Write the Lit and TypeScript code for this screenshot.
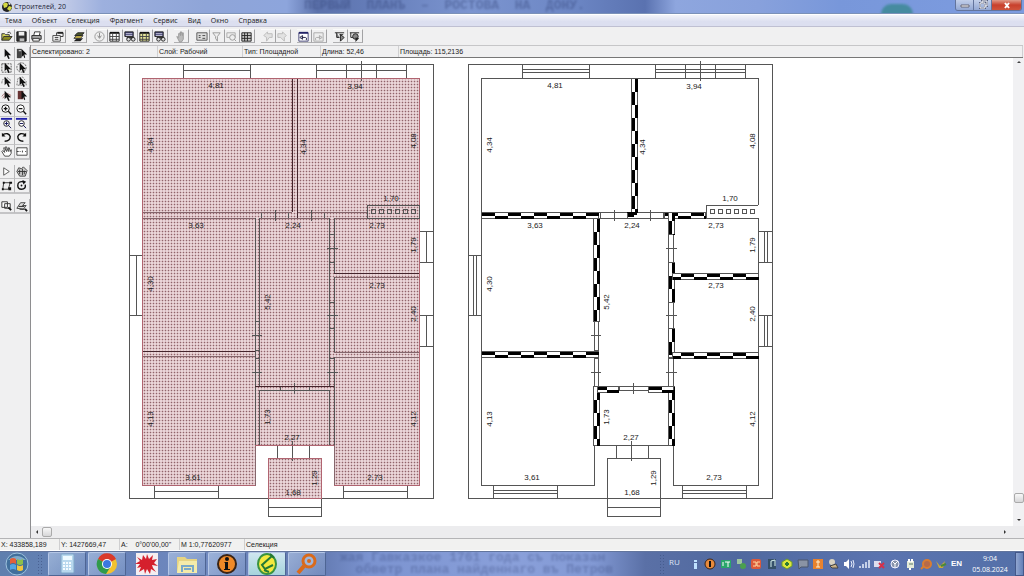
import { LitElement, html, svg, css } from "lit";

const arrow = svg`<path d="M5 2v9l2-2 2 4 1.500-.6-1.600-3.400H12z" fill="#111"/>`;
const ICONS: Record<string, unknown> = {
  open: svg`<path d="M2 11V4h3l1 1h4v2" fill="#d6d65a" stroke="#333"/><path d="M2 11l2-4h9l-3 4z" fill="#8a8a20" stroke="#333"/><path d="M8 3q2-2 4 1" fill="none" stroke="#333"/>`,
  save: svg`<path d="M2 2h10v10H2z" fill="#333" stroke="#111"/><path d="M4 2h6v4H4z" fill="#eee"/><path d="M5 9h5v3H5z" fill="#bbb"/>`,
  print: svg`<path d="M4 6l1-4h6l-1 4" fill="#fff" stroke="#333"/><path d="M2 6h10v4H2z" fill="#aaa" stroke="#222"/><path d="M3 9h7v3H3z" fill="#eee" stroke="#333"/>`,
  props: svg`<path d="M2 6h8v6H2z" fill="#fff" stroke="#444"/><path d="M4 8h4M4 10h4M6 6V3h7v4h-3" fill="none" stroke="#333"/><path d="M7 3h6" stroke="#222" stroke-width="2"/>`,
  layers: svg`<path d="M2 12l3-3h7l-3 3z" fill="#222"/><path d="M2 9l3-3h7l-3 3z" fill="#ccb84a" stroke="#333"/><path d="M3 6l3-3h7l-3 3z" fill="#4b5730" stroke="#222"/>`,
  clock: svg`<circle cx="7" cy="7" r="5" fill="#eee" stroke="#999"/><path d="M7 3v5M5 6l2 3 2-3" fill="none" stroke="#888"/>`,
  table: svg`<path d="M2 3h10v9H2z" fill="#fff" stroke="#222"/><path d="M2 3h10" stroke="#111" stroke-width="2"/><path d="M5 3v9M9 3v9M2 7h10M2 10h10" stroke="#444"/>`,
  tableY: svg`<path d="M2 3h10v9H2z" fill="#e5e59a" stroke="#222"/><path d="M2 3h10" stroke="#111" stroke-width="2"/><path d="M5 3v9M9 3v9M2 7h10M2 10h10" stroke="#444"/>`,
  search: svg`<path d="M2 2h9v5H2z" fill="#447" stroke="#222"/><path d="M3 4h7M3 6h7" stroke="#ccd"/><path d="M4 8h8" stroke="#333" stroke-width="2"/><circle cx="6" cy="10" r="2" fill="#ddd" stroke="#222"/><circle cx="11" cy="10" r="2" fill="#ddd" stroke="#222"/>`,
  hand: svg`<path d="M3 7l2 1V4l1-1 1 3V2h1l1 4V3h1v7l-2 3H6z" fill="#bbb" stroke="#999"/>`,
  card: svg`<path d="M2 3h11v8H2z" fill="#ddd" stroke="#555"/><path d="M4 6h2M4 8h2M8 6h3M8 9h3" stroke="#444"/>`,
  filter: svg`<path d="M3 3h8L8 7v5L6 9V7z" fill="#eee" stroke="#999"/>`,
  find: svg`<path d="M2 3h9v5H2z" fill="#eee" stroke="#aaa"/><circle cx="8" cy="8" r="3" fill="#eee" stroke="#999"/><path d="M10 10l2 2" stroke="#999"/>`,
  grid: svg`<path d="M2 3h10v9H2zM5 3v9M8 3v9M2 6h10M2 9h10" fill="#ccc" stroke="#222"/>`,
  left: svg`<path d="M3 6l4-4v2h5v4h-3l-3 4V8z" fill="#e2e2e2" stroke="#bbb"/>`,
  right: svg`<path d="M11 6L7 2v2H2v4h3l4 4V8z" fill="#e2e2e2" stroke="#bbb"/>`,
  undo: svg`<path d="M2 3h10v9H2z" fill="#fff" stroke="#447"/><path d="M2 3h10" stroke="#226" stroke-width="2"/><path d="M3 8l3-2v4zM5 8h4q2 0 1 3" fill="none" stroke="#224"/>`,
  redo: svg`<path d="M2 3h10v9H2z" fill="#eee" stroke="#aaa"/><path d="M11 8L8 6v4zM9 8H5q-2 0-1 3" fill="none" stroke="#aaa"/>`,
  tree: svg`<path d="M2 3h10M4 3v5h3M7 5h4M8 5v7l4-4z" fill="#888" stroke="#222"/>`,
  tree2: svg`<path d="M2 3h10M3 3v5h3" fill="none" stroke="#222"/><circle cx="8" cy="7" r="3" fill="#888" stroke="#222"/><path d="M8 8v5l4-4z" fill="#222"/>`,
  arrow,
  arrowBox: svg`<path d="M2 2h5v10H2z" fill="#444"/><path d="M4 4h3" stroke="#eee"/><path d="M7 2v9l2-2 1 3 1-1-1-3h3z" fill="#111"/>`,
  selRect: svg`<path d="M2 3h10v9H2z" fill="none" stroke="#555" stroke-dasharray="2 1"/>${arrow}`,
  selCircle: svg`<circle cx="7" cy="7" r="5" fill="none" stroke="#555" stroke-dasharray="2 1"/>${arrow}`,
  selArc: svg`<path d="M2 9q0-6 6-6l4 3" fill="none" stroke="#777" stroke-dasharray="2 1"/>${arrow}`,
  selPoly: svg`<path d="M2 11l1-7 5-2 4 5v4z" fill="none" stroke="#777" stroke-dasharray="2 1"/>${arrow}`,
  selRed: svg`<path d="M2 8q3-6 10-1M3 10q3-6 8-1" fill="none" stroke="#a77"/>${arrow}`,
  arrowRed: svg`<path d="M3 2h6v9H3z" fill="#633"/><path d="M7 2v9l2-2 1 3 1-1-1-3h3z" fill="#111"/>`,
  zoomIn: svg`<circle cx="6" cy="6" r="4" fill="#fff" stroke="#111"/><path d="M4 6h4M6 4v4M9 9l3 3" stroke="#111" stroke-width="1.500"/>`,
  zoomOut: svg`<circle cx="6" cy="6" r="4" fill="#fff" stroke="#222"/><path d="M4 6h4M9 9l3 3" stroke="#111" stroke-width="1.500"/>`,
  zoomInB: svg`<path d="M1 2h12" stroke="#22a" stroke-width="2"/><circle cx="7" cy="7" r="3" fill="#fff" stroke="#222"/><path d="M5 7h4M7 5v4M9 9l3 3" stroke="#115"/>`,
  zoomOutB: svg`<path d="M1 2h12" stroke="#22a" stroke-width="2"/><circle cx="7" cy="7" r="3" fill="#fff" stroke="#222"/><path d="M5 7h4M9 9l3 3" stroke="#115"/>`,
  rotL: svg`<path d="M3 4q6-3 8 2 0 5-6 5" fill="none" stroke="#111" stroke-width="1.500"/><path d="M2 2v4h4z" fill="#111"/>`,
  rotR: svg`<path d="M11 4q-6-3-8 2 0 5 6 5" fill="none" stroke="#111" stroke-width="1.500"/><path d="M12 2v4H8z" fill="#111"/>`,
  pan: svg`<path d="M5 12L2 7l1-1 2 2-1-5h1l2 4-1-5h1l2 5 0-4h1l1 4 1-2 0 4-2 3z" fill="#fff" stroke="#444"/>`,
  frame: svg`<path d="M2 3h11v8H2z" fill="#fff" stroke="#444"/><path d="M2 7h2M5 7h1M8 6v2M11 7h1" stroke="#333"/>`,
  triangle: svg`<path d="M4 3v8l6-4z" fill="#fff" stroke="#555"/>`,
  handSel: svg`<path d="M5 12L2 7l2-4 3 1 2-2 4 4-2 6z" fill="#ccc" stroke="#444"/><path d="M5 5v5M8 4v7M10 6v4M3 7h9" stroke="#333"/>`,
  nodes: svg`<path d="M3 11L4 4h7l-2 7z" fill="none" stroke="#333"/><path d="M2 10h2v2H2zM3 3h2v2H3zM10 3h3v2h-3zM9 9h3v3H9z" fill="#111"/>`,
  rotate: svg`<path d="M9 3q-6-1-6 4 0 4 4 4 5 0 4-5" fill="none" stroke="#111" stroke-width="1.500"/><path d="M8 1l4 2-3 3z" fill="#111"/><circle cx="7" cy="7" r="1" fill="#111"/>`,
  copyObj: svg`<path d="M2 3h6v6H2zM5 5h6v5H5z" fill="#fff" stroke="#333"/><path d="M9 9l3 3" stroke="#111" stroke-width="2"/>`,
  stackObj: svg`<path d="M2 10l4-6h5l-3 3h4l-3 4z" fill="#ddd" stroke="#444"/><path d="M4 8h6M5 11h7" stroke="#222"/><path d="M11 11l2 2" stroke="#111" stroke-width="2"/>`,
};

const TOOLBAR = [
  [["open", "Открыть"], ["save", "Сохранить"], ["print", "Печать"]],
  [["props", "Свойства"]],
  [["layers", "Слои"]],
  [["clock", "Время"], ["table", "Таблица"], ["search", "Поиск"], ["tableY", "Выборка"], ["search", "Поиск в выборке"]],
  [["hand", "Сдвиг"]],
  [["card", "Карточка"], ["filter", "Фильтр"], ["find", "Найти"], ["grid", "Сетка"]],
  [["left", "Назад"], ["right", "Вперёд"]],
  [["undo", "Отменить"], ["redo", "Повторить"]],
  [["tree", "Дерево"], ["tree2", "Структура"]],
];

const PALETTE = [
  [["arrow", "Указатель"], ["arrowBox", "Выбор объекта"], ["selRect", "Выбор рамкой"], ["selCircle", "Выбор кругом"],
   ["selArc", "Выбор дугой"], ["selPoly", "Выбор полигоном"], ["selRed", "Выбор линией"], ["arrowRed", "Снять выбор"],
   ["zoomIn", "Увеличить"], ["zoomOut", "Уменьшить"], ["zoomInB", "Увеличить лист"], ["zoomOutB", "Уменьшить лист"],
   ["rotL", "Повернуть влево"], ["rotR", "Повернуть вправо"], ["pan", "Рука"], ["frame", "Рамка"]],
  [["triangle", "Узел"], ["handSel", "Перенос"], ["nodes", "Узлы"], ["rotate", "Вращение"]],
  [["copyObj", "Копия"], ["stackObj", "Порядок"]],
];

const icon = (name: string) => html`<svg class="icon" viewBox="0 0 14 14" aria-hidden="true">${ICONS[name]}</svg>`;

/* text, centre x, centre y, vertical */
const LABELS: [string, number, number, boolean][] = [
  ["4,81", 216, 85, false], ["3,94", 355, 86, false], ["4,34", 150, 145, true], ["4,34", 303, 147, true],
  ["4,08", 413, 141, true], ["1,70", 391, 198, false], ["3,63", 196, 225, false], ["2,24", 293, 225, false],
  ["2,73", 377, 225, false], ["1,79", 413, 245, true], ["4,30", 150, 284, true], ["5,42", 267, 302, true],
  ["2,73", 377, 285, false], ["2,40", 413, 314, true], ["4,13", 150, 419, true], ["1,73", 267, 417, true],
  ["2,27", 292, 437, false], ["4,12", 413, 419, true], ["3,61", 193, 477, false], ["2,73", 375, 477, false],
  ["1,29", 314, 478, true], ["1,68", 293, 492, false],
];
const labels = LABELS.map(([t, x, y, v]) =>
  svg`<text class="dim" text-anchor="middle" transform="translate(${x} ${y})${v ? " rotate(-90)" : ""}" y="3">${t}</text>`);

const OUTER = "M129 64H433V498H129zM268 458H321V516H268zM268 507H321M277 445V458M309 445V458";
const ROOMS = "M142 78H419V205M419 218V485H334V357M255 357V485H142V78M142 212H292M298 212H367M142 218H255M259 218H329M334 218H419M367 218V205H419";
const WINDOWS = "M183 64V78M250 64V78M316 64V78M346 64V78M376 64V78M406 64V78M361 61V81M154 485V498M218 485V498M343 485V498M407 485V498M129 255H142M129 315H142M419 231H433M419 262H433M419 315H433M419 346H433";
const CORE = "M255 218V445M259 218V386M329 218V386M334 218V273M334 277V352M334 357V445M255 445H334M255 386H334M259 445V390H329V445";
const DOORS = "M275 210V221M311 210V221M261 213V218M288 213V218M324 213V218M252 335H262M252 372H262M327 248H338M327 315H338M327 372H338M294 383V394M280 386V390M309 386V390M255 321H259M255 350H259M255 358H259M329 234H334M329 262H334M329 302H334M329 328H334M329 358H334M292 441V461";
const CHIMNEY = [371, 379, 387, 395, 403, 411].map((x) => svg`<rect x=${x} y="209" width="4" height="4"/>`);

/* Partition of two half-width rows of alternating 13px blocks. first = which row opens with a block. */
const partition = (x: number, y: number, len: number, vertical: boolean, first: 0 | 1, skip = 0) => {
  const line = (row: number) => {
    const off = skip + (row === first ? 0 : 13);
    const d = vertical ? `M${x + 1 + row * 3} ${y}v${len}` : `M${x} ${y + 1 + row * 3}h${len}`;
    return svg`<path d=${d} class="block" stroke-dashoffset=${off}/>`;
  };
  return svg`<rect class="wall" x=${x - 1} y=${y - 1} width=${vertical ? 6 : len} height=${vertical ? len : 6}/>${line(0)}${line(1)}`;
};

const leftPlan = svg`
  <g>
    <path d="M142 78H419V485H334V445H255V485H142zM268 458H321V498H268z" fill="url(#dots)"/>
    <path class="ln" d=${OUTER + WINDOWS}/>
    <path class="ln" d="M183 70H250M316 70H406M154 491H218M343 491H407M136 255V315M426 231V262M426 315V346"/>
    <path class="soft" d=${ROOMS + "M142 356H255M334 357H419M334 277H419M292 78V212M297 78V218"}/>
    <path class="ln" d=${CORE + DOORS}/>
    <path class="dark" d="M142 351H255M334 273H419M292 78V212M297 78V218M255 386H334"/>
    <path class="soft" d="M334 352H419"/>
    <path class="edge" d="M142 78H419V205M419 218V485H334M334 445H255M255 485H142V78M268 458H321V498H268z"/>
    <path class="ln" d="M367 205H419V218H367z"/>
    <g class="ln">${CHIMNEY}</g>
    ${labels}
  </g>`;

const rightPlan = svg`
  <g transform="translate(339 0)">
    <path class="ln" d=${OUTER + WINDOWS + ROOMS + CORE}/>
    <path class="ln" d="M183 69H250M183 72H250M316 69H406M316 72H406M154 490H218M154 493H218M343 490H407M343 493H407M134 255V315M137 255V315M425 231V262M428 231V262M425 315V346M428 315V346M259 212H288M297 212H325"/>
    ${partition(293, 79, 134, true, 1)}
    ${partition(143, 213, 117, false, 0)}
    ${partition(326, 213, 41, false, 0)}
    ${partition(255, 219, 103, true, 1)}
    ${partition(143, 352, 117, false, 0)}
    ${partition(330, 213, 22, true, 1, 5)}
    ${partition(330, 263, 40, true, 1)}
    ${partition(330, 329, 29, true, 1)}
    ${partition(334, 274, 86, false, 1, 5)}
    ${partition(334, 353, 86, false, 1, 5)}
    ${partition(255, 387, 59, true, 1)}
    ${partition(330, 387, 59, true, 1)}
    ${partition(259, 387, 21, false, 0, 4)}
    ${partition(310, 387, 25, false, 0)}
    <path d="M288 212h10v3h-3v2h-7z" fill="#000"/>
    <path class="ln" d=${DOORS}/>
    <g class="ln">${CHIMNEY}</g>
    ${labels}
  </g>`;

const TASKS = [
  ["Калькулятор", "on", svg`<rect x="6" y="1" width="13" height="19" rx="1" fill="#b8d8ee" stroke="#7fa6c8"/><path d="M8 3h9v4H8z" fill="#eefaff"/><path d="M8 10h9M8 13h9M8 16h9" stroke="#f4fbff" stroke-width="2" stroke-dasharray="2 1"/>`],
  ["Chrome", "on", svg`<circle cx="12" cy="11" r="10" fill="#f2c230"/><path d="M12 11L3 6a10 10 0 0 1 18 0z" fill="#d93a2b"/><path d="M12 11L3 6a10 10 0 0 0 8 15l5-8z" fill="#2f9a4b"/><circle cx="12" cy="11" r="5" fill="#fff"/><circle cx="12" cy="11" r="4" fill="#3b78e0"/>`],
  ["Редактор", "", svg`<path d="M1 0h22v22H1z" fill="#f4eef0"/><path d="M2 4l5 3 1-5 3 4 1-5 2 5 4-4-1 5 5-1-3 4 4 3-6-1 1 3 3 4-5-3-1 5-3-5-2 5-1-5-5 3 2-5-4 1 3-4-5 0 5-3z" fill="#d5202d"/>`],
  ["Проводник", "on", svg`<path d="M2 4h8l2 2h10v14H2z" fill="#e6d482"/><path d="M4 8h18v12H2z" fill="#f4ebaa"/><path d="M7 19v-6h11v6M9 16h7" fill="none" stroke="#79a9c9" stroke-width="2"/>`],
  ["Информация", "on", svg`<circle cx="12" cy="11" r="9" fill="#f08a28" stroke="#3a2415" stroke-width="2"/><path d="M10 9h3v7h2v1H9v-1h1v-6H9z" fill="#111"/><circle cx="12" cy="6" r="2" fill="#111"/>`],
  ["План", "on lit", svg`<ellipse cx="12" cy="11" rx="9" ry="10" fill="#f4e93e" stroke="#3a9340" stroke-width="2"/><path d="M17 3L7 12l3 4 8-4M15 1l4 4M9 17l5 2" fill="none" stroke="#257a35" stroke-width="2"/>`],
  ["Поиск", "on", svg`<circle cx="14" cy="8" r="6" fill="#9fb6dc" stroke="#d96a1c" stroke-width="3"/><circle cx="14" cy="8" r="2" fill="#d96a1c"/><path d="M9 13l-6 7" stroke="#d96a1c" stroke-width="4"/>`],
] as const;

const TRAY = [
  svg`<path d="M5 2h3v2H5zM5 5h3v6H5z" fill="#bfe2ff"/>`,
  svg`<circle cx="6" cy="6" r="5" fill="#e88a3c" stroke="#3b2418"/><path d="M6 3v6" stroke="#111" stroke-width="2"/>`,
  svg`<path d="M1 2h10v8H1z" fill="#2ba56b"/><path d="M3 4v4M5 4h5M8 4v5" stroke="#fff"/>`,
  svg`<path d="M2 1h5v5H2z" fill="#9ec5a0"/><circle cx="8" cy="8" r="3" fill="#4aa04e"/>`,
  svg`<rect x="1" y="1" width="10" height="10" rx="2" fill="#dc5a3a"/><path d="M3 4h3v4H3M10 4H7v4h3" fill="none" stroke="#ffd8a0"/>`,
  svg`<path d="M2 1h8v10H2z" fill="#35506a"/><path d="M5 9V3l4-1v6" fill="none" stroke="#d7f0ee"/>`,
  svg`<path d="M6 1l5 3v4l-5 3-5-3V4z" fill="#dce63c" stroke="#6a9a30"/><path d="M4 6h4M6 4v4" stroke="#2c7a35" stroke-width="2"/>`,
  svg`<path d="M1 2h10v7H4l-2 2z" fill="#8a93a5" stroke="#4c566c"/>`,
  svg`<path d="M1 1h10v10H1z" fill="#e8822e"/><path d="M6 2v7M4 4h4M4 9h4" stroke="#fff0d0"/>`,
  svg`<circle cx="5" cy="4" r="3" fill="#d8d2c0"/><path d="M3 8l6-2 2 4H5z" fill="#c9b287" stroke="#444"/>`,
  svg`<path d="M1 4h2l3-3v10L3 8H1z" fill="#fff"/><path d="M8 3q2 3 0 6M10 2q2 4 0 8" fill="none" stroke="#e8eefc"/>`,
  svg`<path d="M1 10h2V8H1zM4 10h2V6H4zM7 10h2V4H7zM10 10h2V2h-2z" fill="#c4d0e8"/>`,
  svg`<path d="M1 3h7v6H1z" fill="#dde"/><path d="M6 5l5 5M11 5l-5 5" stroke="#d5304a" stroke-width="2"/>`,
  svg`<circle cx="6" cy="6" r="4" fill="#8793ab" stroke="#eef"/><path d="M3 3l3 3 3-3M6 6v4" fill="none" stroke="#fff"/>`,
  svg`<path d="M3 3h7v7H3z" fill="#e4ead8"/><path d="M5 1v3M8 1v3M6 10v2" stroke="#fff" stroke-width="2"/><path d="M5 6h4" stroke="#576"/>`,
  svg`<circle cx="7" cy="6" r="4" fill="#b66a4a" stroke="#d97c32" stroke-width="2"/><path d="M4 8l-3 3" stroke="#d97c32" stroke-width="2"/>`,
  svg`<path d="M1 3l4 5 5-5-2 7H4z" fill="#caa83c"/><path d="M6 8l5-2" stroke="#4a8a3a" stroke-width="2"/>`,
];

class AppRoot extends LitElement {
  static styles = css`
    :host { display: flex; flex-direction: column; min-height: 100vh; overflow: hidden; background: #f0f0f1;
      font: 7px/12px "Liberation Sans", Arial, sans-serif; color: #222; }
    * { box-sizing: border-box; }
    button { font: inherit; color: inherit; border: 0; padding: 0; margin: 0; background: none; display: block; }
    svg { display: block; }
    .title { height: 14px; display: flex; align-items: center; position: relative; overflow: hidden; border-bottom: 1px solid #7b91b8;
      background: linear-gradient(90deg, #d5daeb 0, #c3cce8 6%, #9db0de 10%, #8fa5d8 20%, #8da5dc 28%, #5c72ac 31%, #647cb8 36%, #7c95d0 46%, #6c86c4 56%, #5a72b0 63%, #8ea6de 66%, #88a1dc 74%, #7897da 82%, #7d9ce0 100%); }
    .title::after { content: ""; position: absolute; left: 86%; top: 4px; width: 32px; height: 20px; border-radius: 16px; background: #468ba0; filter: blur(1px); }
    .logo { width: 12px; height: 12px; margin: 0 1px; }
    .title h1 { margin: 0; font: 7px/13px "Open Sans", sans-serif; color: #1b2438; }
    .ghost { position: absolute; white-space: pre; font: bold 14px/12px "Liberation Mono", monospace; color: #2c3c70; opacity: .4; filter: blur(1px); }
    .title .ghost { left: 304px; top: 0; font-size: 13px; }
    .winbtns { display: flex; margin-left: auto; align-self: flex-start; z-index: 1; margin-right: 2px; border: 1px solid #63749c; border-top: 0; border-radius: 0 0 3px 3px; overflow: hidden; }
    .winbtns button { width: 18px; height: 10px; background: linear-gradient(#c2cfea, #93a8d4); border-right: 1px solid #63749c; }
    .winbtns button svg { width: 12px; height: 10px; margin: 0 auto; }
    .winbtns .close { width: 29px; border: 0; background: linear-gradient(#e09a88, #c8402c 50%, #d0543c); }
    .menu { height: 13px; display: flex; gap: 10px; padding: 0 5px; border-top: 1px solid #fff; border-bottom: 1px solid #bfc0d2; background: linear-gradient(#f3f4fa, #dcdff0 60%);
      font: 7px/11px "Open Sans", sans-serif; }
    .tools { height: 18px; display: flex; gap: 6px; padding-top: 2px; }
    .group { display: flex; }
    .tools button { width: 15px; height: 14px; border-right: 1px solid #a2a2a4; border-bottom: 1px solid #b0b0b2; border-top: 1px solid #fafafa; }
    .icon { width: 13px; height: 13px; }
    .main { flex: 1; display: grid; grid-template-columns: 31px minmax(0, 1fr); }
    .palette { border-right: 1px solid #8e8e90; display: flex; flex-direction: column; gap: 5px; padding-top: 2px; }
    .pgroup { display: grid; grid-template-columns: 15px 15px; grid-auto-rows: 14px; border-bottom: 1px solid #c4c4c6; }
    .pgroup button { border-right: 1px solid #b6b6b8; border-bottom: 1px solid #c4c4c6; }
    .work { display: flex; flex-direction: column; min-width: 0; }
    .info { height: 13px; display: flex; border-top: 1px solid #c6c6c8; border-bottom: 1px solid #777; margin-right: 1px; }
    .info span { padding-left: 1px; border-right: 1px solid #d0d0d2; width: 78px; line-height: 11px; white-space: nowrap; }
    .info .wide { width: 127px; } .info .mid { width: 85px; } .info .rest { flex: 1; }
    .view { flex: 1; display: flex; min-height: 0; }
    .canvas { flex: 1; background: #fff; min-width: 0; }
    .canvas svg { width: 100%; height: 100%; shape-rendering: crispEdges; }
    .ln { fill: none; stroke: #555; } .soft { fill: none; stroke: #85666c; } .dark { fill: none; stroke: #44242c; } .edge { fill: none; stroke: #b06470; }
    .block { stroke: #000; stroke-width: 3; stroke-dasharray: 13 13; }
    .wall { fill: #fff; stroke: #555; }
    .dim { font: 8px "Liberation Sans", Arial, sans-serif; fill: #222; }
    .vbar { width: 11px; background: #f1f1f3; display: flex; flex-direction: column; align-items: center; justify-content: space-between; padding-bottom: 2px; }
    .hbar { height: 12px; background: #ececee; display: flex; align-items: center; padding: 0 15px 0 2px; gap: 1px; }
    .hbar .end { margin-left: auto; }
    .vbar .lower { display: flex; flex-direction: column; gap: 13px; align-items: center; }
    .thumb { width: 10px; height: 10px; border: 1px solid #aaa; border-radius: 2px; background: linear-gradient(#f8f8f8, #d6d6d8); }
    .arr { width: 8px; height: 8px; } .arr svg { width: 8px; height: 8px; }
    .status { height: 13px; display: flex; border-top: 1px solid #b4b4b6; border-bottom: 1px solid #fff; background: #f1f1f0; }
    .status span { width: 60px; padding-left: 1px; border-right: 1px solid #cfcfd0; white-space: pre; line-height: 11px; }
    .status .w65 { width: 65px; } .status .rest { flex: 1; border: 0; }
    .taskbar { height: 25px; display: flex; align-items: center; position: relative; overflow: hidden; border-top: 1px solid #62759d; color: #fff;
      background: linear-gradient(90deg, #5f7fae 0, #6681b8 10%, #7089bf 20%, #6279b0 31%, #7b93d0 36%, #8aa0da 50%, #8299d4 58%, #5a70a6 63%, #50699f 72%, #5b74b0 86%, #5470a8 100%); }
    .taskbar .ghost { left: 340px; top: 0; font-size: 13px; opacity: .3; }
    .orb { width: 26px; height: 24px; margin: 0 7px 0 4px; } .orb svg { width: 26px; height: 24px; }
    .tasks { display: flex; gap: 2px; margin-left: 5px; }
    .tasks button { width: 38px; height: 24px; border: 1px solid transparent; border-radius: 2px; }
    .tasks .on { background: linear-gradient(135deg, #b9cdea99, #8fa9d455); border-color: #b4c6e6 #4e6594 #4e6594 #b4c6e6; }
    .tasks .lit { background: linear-gradient(#cfe6f0, #a6d4dc); }
    .tasks svg { width: 24px; height: 22px; margin: 0 auto; }
    .grip { width: 6px; height: 20px; background: radial-gradient(#3f5484 1px, transparent 1px) 0 0 / 3px 3px; opacity: .7; }
    .tray { margin-left: auto; display: flex; align-items: center; z-index: 1; }
    .lang { font: 8px/12px "Open Sans", sans-serif; margin: 0 9px 4px 4px; color: #dfe6f6; }
    .icons { display: flex; justify-content: space-between; width: 258px; } .icons svg { width: 12px; height: 12px; }
    .layout { font: bold 8px/12px "Liberation Sans", sans-serif; margin: 0 10px 0 4px; }
    .clock { font: 7px/11px "Open Sans", sans-serif; text-align: center; width: 36px; margin-right: 7px; }
    .peek { width: 9px; height: 24px; border: 1px solid #43588a; background: linear-gradient(90deg, #91a6d0, #6480b8); }
  `;

  render() {
    return html`
      <header class="title">
        <svg class="logo" viewBox="0 0 12 12"><circle cx="6" cy="6" r="5" fill="#222"/><path d="M2 3q3-3 5 0l-1 3-3 1zM8 5l3 1-2 4-3-2z" fill="#d5d943"/><path d="M7 1l3 2-2 1z" fill="#eee"/></svg>
        <h1>Строителей, 20</h1>
        <div class="ghost" aria-hidden="true">ПЕРВЫЙ  ПЛАНЪ  –  РОСТОВА  НА  ДОНУ.</div>
        <div class="winbtns">
          <button aria-label="Свернуть"><svg viewBox="0 0 12 10"><path d="M2 5h8v2H2z" fill="#fff" stroke="#667"/></svg></button>
          <button aria-label="Развернуть"><svg viewBox="0 0 12 10"><path d="M3 3h5v5H3zM5 3V1h5v5H8" fill="none" stroke="#566080" stroke-width="2"/><path d="M3 3h5v5H3zM5 3V1h5v5H8" fill="none" stroke="#fff"/></svg></button>
          <button class="close" aria-label="Закрыть"><svg viewBox="0 0 12 10"><path d="M4 3l4 5M8 3L4 8" stroke="#fff" stroke-width="2"/></svg></button>
        </div>
      </header>
      <nav class="menu">${["Тема", "Объект", "Селекция", "Фрагмент", "Сервис", "Вид", "Окно", "Справка"].map((m) => html`<button>${m}</button>`)}</nav>
      <div class="tools">${TOOLBAR.map((g) => html`<div class="group">${g.map(([i, t]) => html`<button aria-label=${t}>${icon(i)}</button>`)}</div>`)}</div>
      <main class="main">
        <aside class="palette">${PALETTE.map((g) => html`<div class="pgroup">${g.map(([i, t]) => html`<button aria-label=${t}>${icon(i)}</button>`)}</div>`)}</aside>
        <section class="work">
          <div class="info"><span class="wide">Селектировано: 2</span><span class="mid">Слой: Рабочий</span><span>Тип: Площадной</span><span>Длина: 52,46</span><span class="rest">Площадь: 115,2136</span></div>
          <div class="view">
            <div class="canvas">
              <svg>
                <defs><pattern id="dots" width="3" height="3" patternUnits="userSpaceOnUse"><path d="M0 0h3v3H0z" fill="#ead5d8"/><path d="M0 0h3v1H0zM0 0h1v3H0z" fill="#d6babe"/><path d="M0 0h1v1H0z" fill="#90646a"/></pattern></defs>
                <g transform="translate(-31 -58)">${leftPlan}${rightPlan}</g>
              </svg>
            </div>
            <div class="vbar">
              <button class="arr" aria-label="Вверх"><svg viewBox="0 0 8 8"><path d="M2 5l2-2 2 2z" fill="#444"/></svg></button>
              <div class="lower"><div class="thumb"></div><button class="arr" aria-label="Вниз"><svg viewBox="0 0 8 8"><path d="M2 3l2 2 2-2z" fill="#333"/></svg></button></div>
            </div>
          </div>
          <div class="hbar">
            <button class="arr" aria-label="Влево"><svg viewBox="0 0 8 8"><path d="M5 2L3 4l2 2z" fill="#333"/></svg></button><div class="thumb"></div>
            <button class="arr end" aria-label="Вправо"><svg viewBox="0 0 8 8"><path d="M3 2l2 2-2 2z" fill="#333"/></svg></button>
          </div>
        </section>
      </main>
      <div class="status"><span>X: 433858,189</span><span>Y: 1427669,47</span><span>A:    0°00'00,00"</span><span class="w65">М 1:0,77620977</span><span class="rest">Селекция</span></div>
      <footer class="taskbar">
        <div class="ghost" aria-hidden="true">жая Гавказкое 1761 года съ показан
  обветр плана найденнаго въ Петров</div>
        <button class="orb" aria-label="Пуск"><svg viewBox="0 0 26 24"><circle cx="13" cy="12" r="11" fill="#416f9c" stroke="#9dc1dd"/><path d="M4 8q9-8 18 0z" fill="#7fa9c8"/><path d="M6 7q3-2 6 0v5q-3-2-6 0z" fill="#e2603a"/><path d="M13 7q3 2 6 0v5q-3 2-6 0z" fill="#8cc04a"/><path d="M6 13q3-2 6 0v5q-3-2-6 0z" fill="#55a5e0"/><path d="M13 13q3 2 6 0v5q-3 2-6 0z" fill="#f0c63e"/></svg></button>
        <div class="grip"></div>
        <div class="tasks">${TASKS.map(([n, c, g]) => html`<button class=${c} aria-label=${n}><svg viewBox="0 0 24 22">${g}</svg></button>`)}</div>
        <div class="tray">
          <div class="grip"></div><span class="lang">RU</span>
          <div class="icons">${TRAY.map((g) => html`<svg viewBox="0 0 12 12">${g}</svg>`)}</div>
          <span class="layout">EN</span>
          <div class="clock">9:04<br>05.08.2024</div>
          <button class="peek" aria-label="Рабочий стол"></button>
        </div>
      </footer>`;
  }
}
customElements.define("app-root", AppRoot);
